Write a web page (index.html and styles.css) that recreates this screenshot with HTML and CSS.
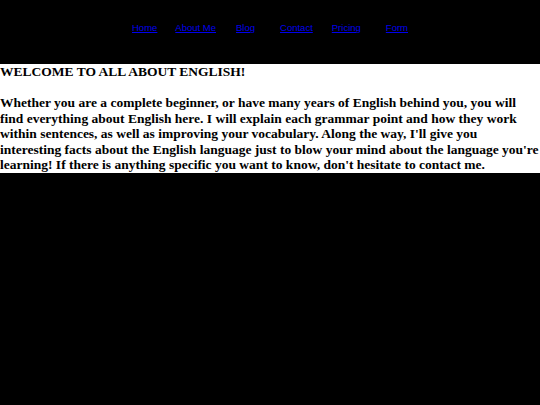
FILE: index.html
```html
<!DOCTYPE html>
<html>
<head>
<meta charset="utf-8">
<title>All About English</title>
<link rel="stylesheet" href="styles.css">
</head>
<body>
<nav class="nav">
  <a href="#">Home</a>
  <a href="#">About Me</a>
  <a href="#">Blog</a>
  <a href="#">Contact</a>
  <a href="#">Pricing</a>
  <a href="#">Form</a>
</nav>
<main class="intro">
  <div>WELCOME TO ALL ABOUT ENGLISH!</div>
  <br>
  <p>Whether you are a complete beginner, or have many years of English behind you, you will find everything about English here. I will explain each grammar point and how they work within sentences, as well as improving your vocabulary. Along the way, I'll give you interesting facts about the English language just to blow your mind about the language you're learning! If there is anything specific you want to know, don't hesitate to contact me.</p>
</main>
</body>
</html>
```
FILE: styles.css
```css
html, body {
  margin: 0;
  padding: 0;
  background: #000;
}
.nav {
  height: 64px;
  display: flex;
  align-items: flex-start;
  padding-left: 132px;
  padding-top: 22px;
  box-sizing: border-box;
  font-family: "Liberation Sans", Arial, sans-serif;
  font-size: 9.5px;
}
.nav a {
  color: #0000ee;
  text-decoration: underline;
}
.nav a:nth-child(2) { margin-left: 18px; }
.nav a:nth-child(3) { margin-left: 20px; }
.nav a:nth-child(4) { margin-left: 25px; }
.nav a:nth-child(5) { margin-left: 19px; }
.nav a:nth-child(6) { margin-left: 25px; }
.intro {
  display: block;
  background: #fff;
  color: #000;
  font-family: "Liberation Serif", "Times New Roman", serif;
  font-weight: bold;
  font-size: 13.5px;
  line-height: 15.57px;
}
.intro p {
  margin: 0;
}
```
